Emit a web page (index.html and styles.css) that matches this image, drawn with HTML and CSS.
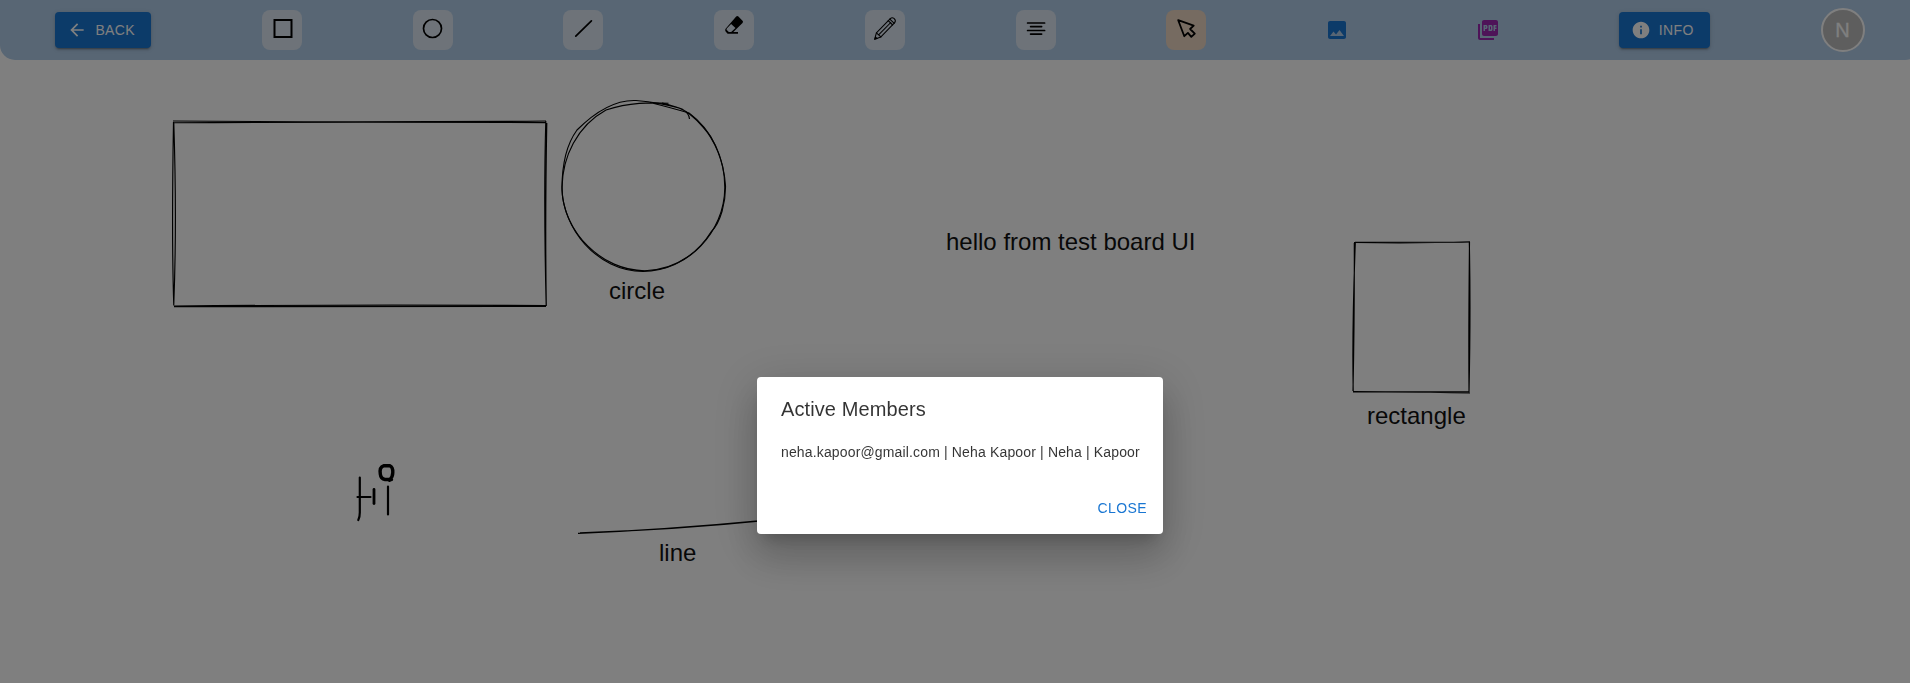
FILE: index.html
```html
<!DOCTYPE html>
<html lang="en">
<head>
<meta charset="utf-8">
<title>Board</title>
<link rel="stylesheet" href="styles.css">
</head>
<body>
<header class="toolbar">
  <button class="btn contained"><svg class="start-icon" viewBox="0 0 24 24"><path d="M20 11H7.83l5.59-5.59L12 4l-8 8 8 8 1.41-1.41L7.83 13H20v-2z"/></svg>BACK</button>
  <button class="tool"><svg viewBox="0 0 40 40"><rect x="12.500" y="10" width="17" height="17" stroke-width="2"/></svg></button>
  <button class="tool"><svg viewBox="0 0 40 40"><circle cx="19.500" cy="18.500" r="9" stroke-width="1.700"/></svg></button>
  <button class="tool"><svg viewBox="0 0 40 40"><path d="M12.800 26.200 28.400 10.800" stroke-width="1.700"/></svg></button>
  <button class="tool"><svg viewBox="0 0 40 40"><path class="solid" d="M22.200 6.600q1.100-1.100 2.200 0l4.100 4.100q1.100 1.100 0 2.200l-9.200 9.200H24v1.600H13.600l-2-2.300q-1-1.300 0-2.600zM17.100 13.900l-4.300 4.600q-.6.8 0 1.500l2 2.100h2.400l4.300-4.100z"/></svg></button>
  <button class="tool"><svg viewBox="0 0 40 40"><g stroke-width="1.050"><path d="M9.600 29.300 11.400 22.800 25.300 8.600q1.700-1.600 3.700-.2 2.300 1.900.7 4.300L15.900 26.900z"/><path d="m13.600 24.800 12.200-12.300M11.400 22.800l2.200 2 2.300 2.100M23.200 10.700l4.500 4.300M24.800 9.100l4.500 4.200"/></g><path class="solid" d="m9.200 29.800 1.100-3.800 2.700 2.700z"/></svg></button>
  <button class="tool"><svg viewBox="0 0 40 40"><path stroke-width="1.700" d="M11.600 13h17M14.600 16.600h11M11.600 20.500h17M14.600 24.100h11"/></svg></button>
  <button class="tool active"><svg viewBox="0 0 40 40"><path stroke-width="1.800" d="m12.200 10.200 15.500 5.500-3.600 3.300 4.700 4.600-3.500 3.300-3.400-4-3.600 3.300z"/></svg></button>
  <button class="tool plain blue"><svg class="icon" viewBox="0 0 24 24"><path d="M21 19V5c0-1.100-.9-2-2-2H5c-1.100 0-2 .9-2 2v14c0 1.100.9 2 2 2h14c1.100 0 2-.9 2-2zM8.500 13.500l2.500 3.010L14.500 12l4.500 6H5l3.500-4.500z"/></svg></button>
  <button class="tool plain purple"><svg class="icon" viewBox="0 0 24 24"><path d="M20 2H8c-1.100 0-2 .9-2 2v12c0 1.100.9 2 2 2h12c1.100 0 2-.9 2-2V4c0-1.100-.9-2-2-2zm-8.500 7.500c0 .83-.67 1.500-1.500 1.500H9v2H7.500V7H10c.83 0 1.500.67 1.500 1.500v1zm5 2c0 .83-.67 1.500-1.500 1.500h-2.500V7H15c.83 0 1.500.67 1.500 1.500v3zm4-3H19v1h1.500V11H19v2h-1.500V7h3v1.500zM9 9.500h1v-1H9v1zM4 6H2v14c0 1.100.9 2 2 2h14v-2H4V6zm10 5.500h1v-3h-1v3z"/></svg></button>
  <button class="btn contained"><svg class="start-icon" viewBox="0 0 24 24"><path d="M12 2C6.480 2 2 6.480 2 12s4.480 10 10 10 10-4.480 10-10S17.520 2 12 2zm1 15h-2v-6h2v6zm0-8h-2V7h2v2z"/></svg>INFO</button>
  <div class="avatar">N</div>
</header>
<svg class="board" viewBox="0 60 1910 623">
  <g class="sketch">
    <path d="M173 121Q350 122.500 546 121M173 122.700Q350 121.600 546 122.600"/>
    <path d="M545.800 121Q543.500 200 546.200 306M546.800 123Q545 220 546.300 306"/>
    <path d="M546 306.400Q350 306.500 174 306.600M546 305.500Q350 304.500 174 306"/>
    <path d="M173.800 305.500Q171.500 240 173.500 122M173.800 304Q177 220 173.800 123"/>
    <path d="M668.500 103.300C650 102.500 630 102 606 110C577 126 562.500 157 562 187C562 228 597 271.300 643 271.300C688 271.300 724.500 232 724.800 188C725 158 712 130 689 113Q672 108 650 102.500"/>
    <path d="M689.500 119Q689.500 113.500 682 109C672 105.500 652 101.500 636 100.500C612 99.500 590 117 577 130C566 145 561.800 165 562 190C563.500 232 602 271 645 270.700C680 270 701 248 711 232C721 222 725.700 202 725.500 186C724 161 714 139 703 127C695 118 688 111.500 680 108.500Q673 105.500 662 103"/>
    <path d="M1354 242.500Q1420 243.500 1470 241.700M1355 242.300Q1420 242.300 1469 242.100"/>
    <path d="M1469.300 242Q1470.800 310 1469 392.500M1469.500 242Q1468.500 330 1469 391"/>
    <path d="M1470 393Q1420 391.500 1353 392M1469 391.700Q1410 392 1353 391.600"/>
    <path d="M1353 391Q1354.500 320 1354.300 243M1353.200 391Q1352 330 1355.300 243"/>
    <path d="M578 533.400Q680 529 788 518M580 532.800Q690 529.200 788 518"/>
  </g>
  <g class="freehand">
    <path d="M359.800 477.500V511Q360 517 358.300 520M357.500 497H370.500M388 486.500V514.500"/>
    <path class="bold" d="M374 489.500V503.500"/>
    <path class="bolder" d="M391.500 479.500H385Q380.800 479 380.300 474Q379.300 467 383.500 465.800H390Q393 467 392.800 472.500Q392.800 477 389.500 480.300"/>
  </g>
  <text x="946" y="250">hello from test board UI</text>
  <text x="609" y="299">circle</text>
  <text x="1367" y="424">rectangle</text>
  <text x="659" y="561">line</text>
</svg>
<div class="backdrop">
  <section class="dialog" role="dialog">
    <h2>Active Members</h2>
    <p>neha.kapoor@gmail.com | Neha Kapoor | Neha | Kapoor</p>
    <div class="actions"><button class="btn text">CLOSE</button></div>
  </section>
</div>
</body>
</html>
```
FILE: styles.css
```css
* { box-sizing: border-box; }
html, body { margin: 0; height: 683px; overflow: hidden; background: #fff; }
body { font-family: "Liberation Sans", Arial, sans-serif; }
.toolbar {
  width: 1920px;
  height: 60px;
  display: flex;
  align-items: center;
  justify-content: space-around;
  background: #b0cce8;
  border-radius: 0 0 15px 15px;
}
.btn {
  display: flex;
  align-items: center;
  justify-content: center;
  border: 0;
  border-radius: 4px;
  font: 14px/24px "Liberation Sans", Arial, sans-serif;
  letter-spacing: 0.4px;
}
.contained {
  padding: 6px 16px;
  color: #fff;
  background: #1976d2;
  box-shadow: 0 3px 1px -2px rgba(0,0,0,.2), 0 2px 2px rgba(0,0,0,.14), 0 1px 5px rgba(0,0,0,.12);
}
.start-icon { width: 20px; height: 20px; margin: 0 8px 0 -4px; fill: currentColor; }
.tool {
  width: 40px;
  height: 40px;
  padding: 0;
  border: 0;
  border-radius: 8px;
  background: #dce6f2;
  display: flex;
  align-items: center;
  justify-content: center;
}
.tool svg { width: 40px; height: 40px; fill: none; stroke: #000; stroke-linecap: round; stroke-linejoin: round; }
.tool svg rect { stroke-linejoin: miter; }
.tool .solid { fill: #000; stroke: none; fill-rule: evenodd; }
.tool.active { background: #ecd6c2; }
.tool.plain { background: none; }
.tool svg.icon { width: 24px; height: 24px; fill: currentColor; stroke: none; }
.blue { color: #1976d2; }
.purple { color: #9c27b0; }
.avatar {
  width: 44px;
  height: 44px;
  display: flex;
  align-items: center;
  justify-content: center;
  border: 2px solid #fff;
  border-radius: 50%;
  background: #bdbdbd;
  color: #fff;
  font-size: 20px;
  -webkit-text-stroke: .3px #fff;
}
.board { display: block; width: 1910px; height: 623px; }
.board text { font-size: 24px; fill: #111; }
.sketch { fill: none; stroke: #000; stroke-width: 1.15; }
.freehand { fill: none; stroke: #000; stroke-width: 2.2; stroke-linecap: round; stroke-linejoin: round; }
.freehand .bold { stroke-width: 2.8; }
.freehand .bolder { stroke-width: 3.4; }
.backdrop {
  position: fixed;
  inset: 0;
  display: flex;
  align-items: center;
  justify-content: center;
  background: rgba(0,0,0,.5);
}
.dialog {
  width: 406px;
  height: 157px;
  margin: 228px 0 0 10px;
  border-radius: 4px;
  background: #fff;
  color: rgba(0,0,0,.8);
  box-shadow: 0 11px 15px -7px rgba(0,0,0,.2), 0 24px 38px 3px rgba(0,0,0,.14), 0 9px 46px 8px rgba(0,0,0,.12);
}
.dialog h2 { margin: 0; padding: 16px 24px; font-size: 20px; font-weight: 400; line-height: 32px; letter-spacing: .1px; }
.dialog p { margin: 0; padding: 1px 24px 20px; font-size: 14px; line-height: 20px; letter-spacing: .15px; white-space: nowrap; }
.actions { display: flex; justify-content: flex-end; padding: 8px; }
.text { padding: 6px 8px; color: #1976d2; background: transparent; }
```
